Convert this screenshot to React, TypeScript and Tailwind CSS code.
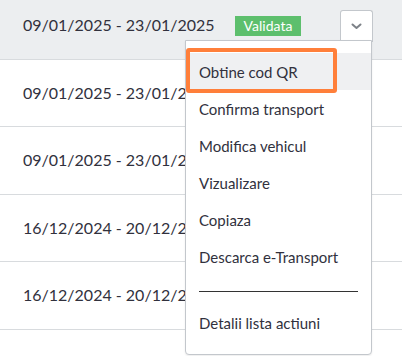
const rows = [
  '09/01/2025 - 23/01/2025',
  '09/01/2025 - 23/01/2025',
  '09/01/2025 - 23/01/2025',
  '16/12/2024 - 20/12/2024',
  '16/12/2024 - 20/12/2024',
];

const actions = ['Obtine cod QR', 'Confirma transport', 'Modifica vehicul', 'Vizualizare', 'Copiaza', 'Descarca e-Transport'];

const ChevronDown = () => (
  <svg width="11" height="7" viewBox="0 0 11 7" fill="none">
    <path d="M1.5 1.5 L5.5 5 L9.5 1.5" stroke="#7d8288" strokeWidth="2" strokeLinecap="round" strokeLinejoin="round" />
  </svg>
);

export default function App() {
  return (
    <div className="relative h-[356px] w-full overflow-hidden bg-white font-['Lato',sans-serif] text-[#31313d]">
      <div className="-mt-[8px]">
        {rows.map((date, i) => (
          <div
            key={i}
            className={`flex h-[67.5px] items-center border-b border-[#d8dbde] pl-[23px] ${i === 0 ? 'bg-[#eceef0]' : ''}`}
          >
            <span className="w-[212px] shrink-0 whitespace-nowrap text-[16px]">{date}</span>
            {i === 0 && (
              <>
                <span className="w-[105px] shrink-0">
                  <span className="inline-block h-[20px] w-[66px] bg-[#5dbf6d] text-center text-[14px] leading-[20px] text-white">Validata</span>
                </span>
                <button
                  type="button"
                  className="mt-[2px] flex h-[32px] w-[33px] items-center justify-center rounded-t-[3px] border border-b-0 border-[#c3c7cc] bg-white"
                >
                  <ChevronDown />
                </button>
              </>
            )}
          </div>
        ))}
      </div>

      <div className="absolute left-[185px] top-[40px] w-[187px] rounded-b-[4px] border border-[#c3c7cc] bg-white pb-[13px] pt-[12px] text-[15px] shadow-[0_1px_2px_rgba(0,0,0,0.08)]">
        {actions.map((a, i) => (
          <div key={a} className={`flex h-[37px] items-center px-[13px] pt-[2px] ${i === 0 ? 'bg-[#eff0f2]' : ''}`}>
            {a}
          </div>
        ))}
        <div className="mx-[13px] mt-[16px] mb-[12px] h-px bg-[#333]" />
        <div className="flex h-[37px] items-center px-[13px] pt-[2px]">Detalii lista actiuni</div>

        <div className="pointer-events-none absolute left-0 top-[7px] h-[45px] w-[151px] rounded-[3px] border-4 border-[#ff7f3a]" />
      </div>
    </div>
  );
}
